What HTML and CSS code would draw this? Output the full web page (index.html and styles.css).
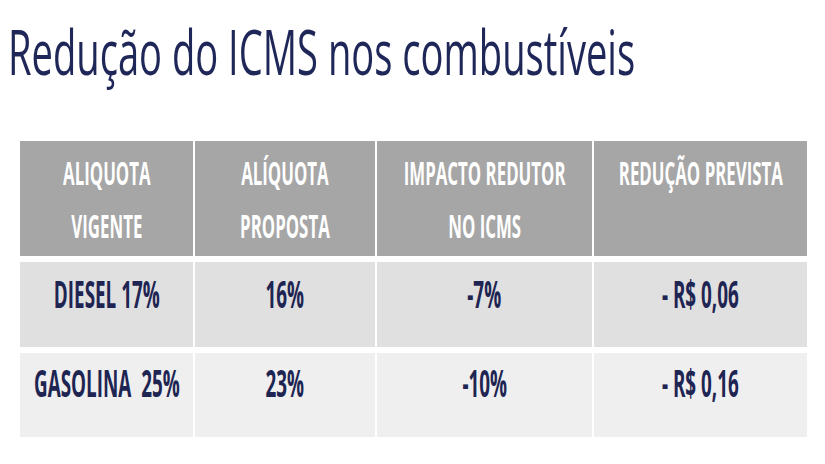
FILE: index.html
```html
<!DOCTYPE html>
<html lang="pt">
<head>
<meta charset="utf-8">
<title>Redução do ICMS nos combustíveis</title>
<link rel="stylesheet" href="styles.css">
</head>
<body>
<div class="slide">
  <h1 class="title"><span class="squeeze-left">Redução do ICMS nos combustíveis</span></h1>
  <div class="table">
    <div class="cell head"><span class="sq">ALIQUOTA<br>VIGENTE</span></div>
    <div class="cell head"><span class="sq">ALÍQUOTA<br>PROPOSTA</span></div>
    <div class="cell head"><span class="sq">IMPACTO REDUTOR<br>NO ICMS</span></div>
    <div class="cell head"><span class="sq">REDUÇÃO PREVISTA</span></div>

    <div class="cell row1"><span class="sq">DIESEL 17%</span></div>
    <div class="cell row1"><span class="sq">16%</span></div>
    <div class="cell row1"><span class="sq">-7%</span></div>
    <div class="cell row1"><span class="sq">- R$ 0,06</span></div>

    <div class="cell row2"><span class="sq">GASOLINA&nbsp;&nbsp;25%</span></div>
    <div class="cell row2"><span class="sq">23%</span></div>
    <div class="cell row2"><span class="sq">-10%</span></div>
    <div class="cell row2"><span class="sq">- R$ 0,16</span></div>
  </div>
</div>
</body>
</html>
```
FILE: styles.css
```css
html, body {
  margin: 0;
  padding: 0;
  background: #ffffff;
}

.slide {
  width: 825px;
  height: 464px;
  overflow: hidden;
  font-family: "Open Sans", "Noto Sans", sans-serif;
}

.title {
  margin: 0;
  padding: 21px 0 0 8px;
  font-size: 62px;
  line-height: 61px;
  font-weight: 400;
  color: #1f2759;
  white-space: nowrap;
}

.squeeze-left {
  display: inline-block;
  transform: scaleX(0.615);
  transform-origin: left center;
}

.table {
  margin: 59px 0 0 20px;
  display: grid;
  grid-template-columns: 173px 180px 215px 213px;
  grid-template-rows: 115px 85px 84px;
  column-gap: 2px;
  row-gap: 6px;
  width: 787px;
}

.cell {
  display: flex;
  justify-content: center;
  align-items: flex-start;
  white-space: nowrap;
  font-weight: 700;
}

.sq {
  display: inline-block;
  text-align: center;
  transform: scaleX(0.51);
  transform-origin: center top;
}

.head {
  background: #a6a6a6;
  color: #ffffff;
  font-size: 33px;
  line-height: 53px;
  padding-top: 5px;
}

.row1, .row2 {
  color: #1e2552;
  font-size: 37px;
  line-height: 40px;
}

.row1 {
  background: #e0e0e0;
  padding-top: 12px;
}

.row2 {
  background: #efefef;
  padding-top: 10px;
}
```
